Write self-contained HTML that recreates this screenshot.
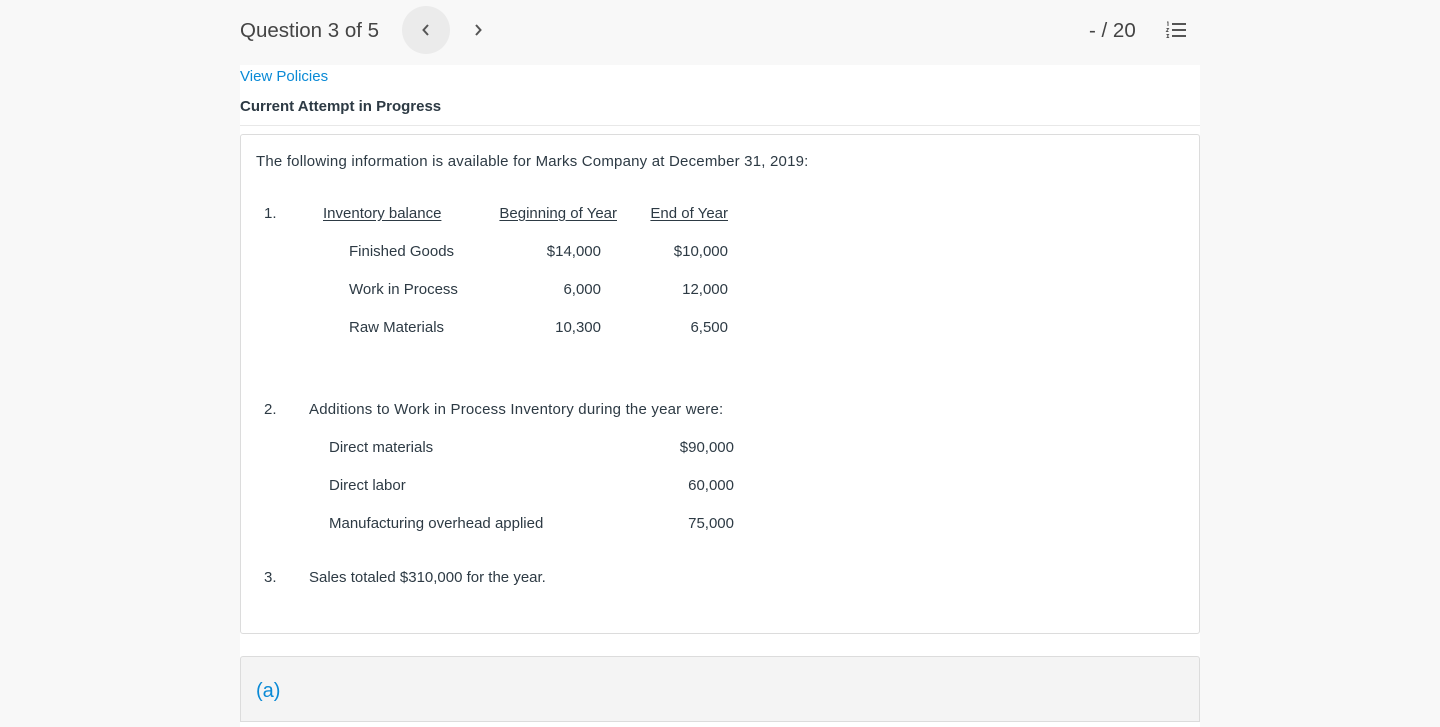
<!DOCTYPE html>
<html><head><meta charset="utf-8"><style>
body{margin:0;width:1440px;height:727px;overflow:hidden;background:#f8f8f8;font-family:"Liberation Sans",sans-serif;color:#2d3a44;position:relative}
.a{position:absolute;white-space:nowrap;font-size:15px;line-height:18px}
.r{text-align:right}
u{text-decoration:underline;text-underline-offset:2px}
</style></head><body>
<div class="a" style="left:240px;top:19px;font-size:20.5px;line-height:24px;color:#444">Question 3 of 5</div>
<div style="position:absolute;left:402px;top:6px;width:48px;height:48px;border-radius:50%;background:#ebebeb"></div>
<svg style="position:absolute;left:420px;top:23px" width="12" height="14"><path d="M8 2 L3.5 7 L8 12" stroke="#555" stroke-width="2" fill="none"/></svg>
<svg style="position:absolute;left:472px;top:23px" width="12" height="14"><path d="M4 2 L8.5 7 L4 12" stroke="#555" stroke-width="2" fill="none"/></svg>
<div class="a" style="left:1089px;top:19px;font-size:20.5px;line-height:24px;color:#444">- / 20</div>
<svg style="position:absolute;left:1165px;top:21px" width="22" height="18"><g stroke="#555" stroke-width="2"><line x1="7" y1="3" x2="21" y2="3"/><line x1="7" y1="9" x2="21" y2="9"/><line x1="7" y1="15" x2="21" y2="15"/></g><g stroke="#555" stroke-width="1" fill="none"><path d="M2 1 L3 1 L3 5"/><path d="M1.5 7.5 L3.5 7.5 L1.5 10.5 L3.5 10.5"/><path d="M1.5 13.5 L3.5 13.5 L2.5 15 L3.5 16.5 L1.5 16.5"/></g></svg>
<div style="position:absolute;left:240px;top:65px;width:960px;height:662px;background:#fff"></div>
<div class="a" style="left:240px;top:68px;color:#0a8ad6">View Policies</div>
<div class="a" style="left:240px;top:98px;font-weight:bold">Current Attempt in Progress</div>
<div style="position:absolute;left:240px;top:125px;width:960px;height:1px;background:#e8e8e8"></div>
<div style="position:absolute;left:240px;top:134px;width:958px;height:498px;border:1px solid #dcdcdc;border-radius:3px"></div>
<div class="a" style="left:256px;top:153px;letter-spacing:0.2px">The following information is available for Marks Company at December 31, 2019:</div>
<div class="a" style="left:264px;top:205px">1.</div>
<div class="a" style="left:323px;top:205px"><u>Inventory balance</u></div>
<div class="a r" style="left:480px;width:137px;top:205px"><u>Beginning of Year</u></div>
<div class="a r" style="left:628px;width:100px;top:205px"><u>End of Year</u></div>
<div class="a" style="left:349px;top:243px">Finished Goods</div>
<div class="a r" style="left:500px;width:101px;top:243px">$14,000</div>
<div class="a r" style="left:628px;width:100px;top:243px">$10,000</div>
<div class="a" style="left:349px;top:281px">Work in Process</div>
<div class="a r" style="left:500px;width:101px;top:281px">6,000</div>
<div class="a r" style="left:628px;width:100px;top:281px">12,000</div>
<div class="a" style="left:349px;top:319px">Raw Materials</div>
<div class="a r" style="left:500px;width:101px;top:319px">10,300</div>
<div class="a r" style="left:628px;width:100px;top:319px">6,500</div>
<div class="a" style="left:264px;top:401px">2.</div>
<div class="a" style="left:309px;top:401px;letter-spacing:0.2px">Additions to Work in Process Inventory during the year were:</div>
<div class="a" style="left:329px;top:439px">Direct materials</div>
<div class="a r" style="left:634px;width:100px;top:439px">$90,000</div>
<div class="a" style="left:329px;top:477px">Direct labor</div>
<div class="a r" style="left:634px;width:100px;top:477px">60,000</div>
<div class="a" style="left:329px;top:515px">Manufacturing overhead applied</div>
<div class="a r" style="left:634px;width:100px;top:515px">75,000</div>
<div class="a" style="left:264px;top:569px">3.</div>
<div class="a" style="left:309px;top:569px">Sales totaled $310,000 for the year.</div>
<div style="position:absolute;left:240px;top:656px;width:958px;height:64px;border:1px solid #dcdcdc;background:#f4f4f4;border-radius:3px 3px 0 0"></div>
<div class="a" style="left:256px;top:679px;font-size:20px;line-height:24px;color:#0a8ad6">(a)</div>
</body></html>
